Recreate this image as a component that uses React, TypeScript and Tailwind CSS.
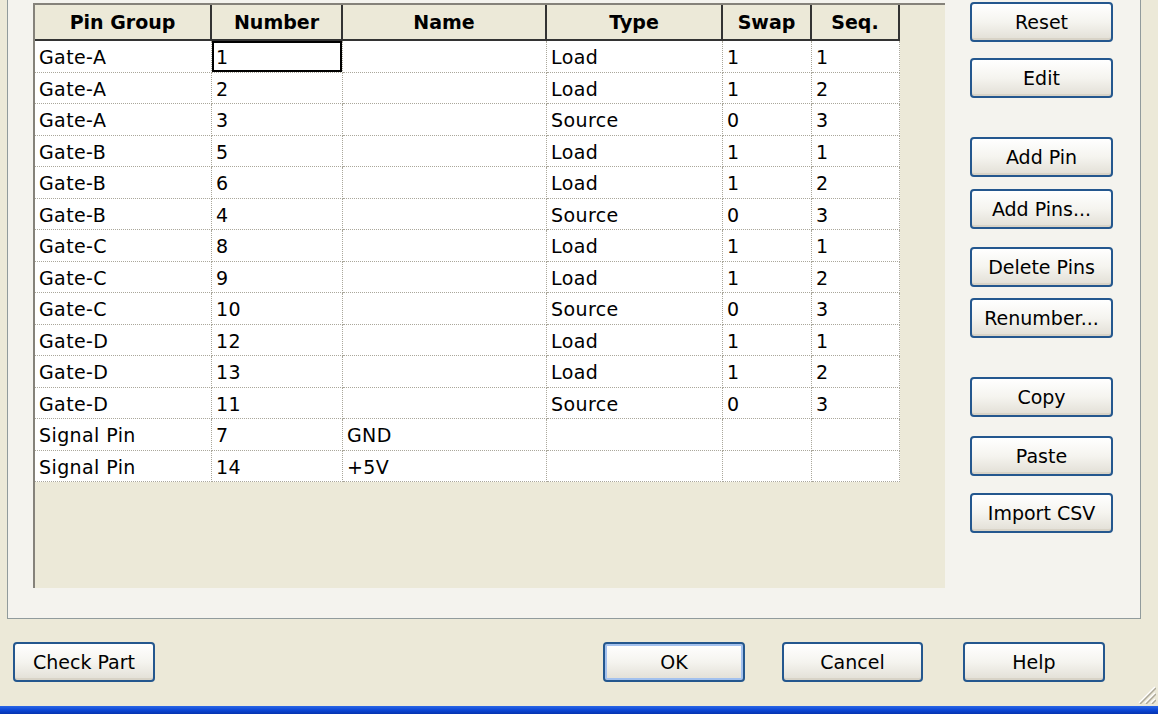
import React from 'react';

type Row = [string, string, string, string, string, string];

const columns = [
  { label: 'Pin Group', width: 'w-[177px]' },
  { label: 'Number', width: 'w-[131px]' },
  { label: 'Name', width: 'w-[204px]' },
  { label: 'Type', width: 'w-[176px]' },
  { label: 'Swap', width: 'w-[89px]' },
  { label: 'Seq.', width: 'w-[88px]' },
];

const rows: Row[] = [
  ['Gate-A', '1', '', 'Load', '1', '1'],
  ['Gate-A', '2', '', 'Load', '1', '2'],
  ['Gate-A', '3', '', 'Source', '0', '3'],
  ['Gate-B', '5', '', 'Load', '1', '1'],
  ['Gate-B', '6', '', 'Load', '1', '2'],
  ['Gate-B', '4', '', 'Source', '0', '3'],
  ['Gate-C', '8', '', 'Load', '1', '1'],
  ['Gate-C', '9', '', 'Load', '1', '2'],
  ['Gate-C', '10', '', 'Source', '0', '3'],
  ['Gate-D', '12', '', 'Load', '1', '1'],
  ['Gate-D', '13', '', 'Load', '1', '2'],
  ['Gate-D', '11', '', 'Source', '0', '3'],
  ['Signal Pin', '7', 'GND', '', '', ''],
  ['Signal Pin', '14', '+5V', '', '', ''],
];

// right-hand column: label + gap above it
const sideButtons = [
  { label: 'Reset', mt: 'mt-[2px]' },
  { label: 'Edit', mt: 'mt-[16px]' },
  { label: 'Add Pin', mt: 'mt-[39px]' },
  { label: 'Add Pins...', mt: 'mt-[12px]' },
  { label: 'Delete Pins', mt: 'mt-[18px]' },
  { label: 'Renumber...', mt: 'mt-[11px]' },
  { label: 'Copy', mt: 'mt-[39px]' },
  { label: 'Paste', mt: 'mt-[19px]' },
  { label: 'Import CSV', mt: 'mt-[17px]' },
];

const XpButton: React.FC<{ label: string; className?: string; isDefault?: boolean }> = ({
  label,
  className = '',
  isDefault = false,
}) => (
  <button
    className={`h-[40px] rounded-[4px] border-2 border-[#24578e] bg-linear-to-b from-[#ffffff] via-[#f5f4ef] to-[#e2dfd6] text-[19px] leading-none text-black flex items-center justify-center ${
      isDefault ? 'shadow-[inset_0_0_0_2px_#a3c1ee]' : 'shadow-[inset_0_-2px_0_#d8d3c7]'
    } ${className}`}
  >
    {label}
  </button>
);

const ResizeGrip: React.FC = () => (
  <svg width="20" height="20" viewBox="0 0 20 20" className="absolute right-[2px] bottom-[2px]">
    <g strokeWidth="1.5">
      <line x1="19" y1="3" x2="3" y2="19" stroke="#ffffff" />
      <line x1="20" y1="4" x2="4" y2="20" stroke="#aca899" />
      <line x1="19" y1="9" x2="9" y2="19" stroke="#ffffff" />
      <line x1="20" y1="10" x2="10" y2="20" stroke="#aca899" />
      <line x1="19" y1="15" x2="15" y2="19" stroke="#ffffff" />
      <line x1="20" y1="16" x2="16" y2="20" stroke="#aca899" />
    </g>
  </svg>
);

const App: React.FC = () => {
  return (
    <div className="w-[1158px] h-[714px] overflow-hidden bg-[#ece9d8] flex flex-col font-['DejaVu_Sans',sans-serif] text-black">
      <div className="ml-[7px] w-[1134px] h-[619px] shrink-0 border-x border-b border-[#919b9c] bg-[#f4f3ee] flex items-start">
        {/* pin grid */}
        <div className="ml-[25px] mt-[3px] w-[912px] h-[585px] bg-[#ece9d8] border-l-2 border-t-2 border-[#85827a] flex flex-col">
          <div className="flex h-[36px] shrink-0">
            {columns.map((col) => (
              <div
                key={col.label}
                className={`${col.width} h-full border-r-2 border-b-2 border-[#333333] flex items-center justify-center text-[19px] font-bold`}
              >
                {col.label}
              </div>
            ))}
          </div>
          {rows.map((row, r) => (
            <div key={r} className="flex h-[31.5px] shrink-0">
              {row.map((cell, c) => (
                <div
                  key={c}
                  className={`${columns[c].width} h-full bg-white border-r border-b border-dotted border-[#aaa79b] flex items-center pl-[4px] pt-[2px] text-[19px] tracking-[0.4px] whitespace-nowrap ${
                    r === 0 && c === 1 ? 'shadow-[inset_0_0_0_2px_#000]' : ''
                  }`}
                >
                  {cell}
                </div>
              ))}
            </div>
          ))}
        </div>

        {/* action buttons */}
        <div className="ml-[25px] w-[143px] flex flex-col">
          {sideButtons.map((b) => (
            <XpButton key={b.label} label={b.label} className={`${b.mt} w-[143px]`} />
          ))}
        </div>
      </div>

      <div className="relative h-[87px] shrink-0 flex items-start pt-[23px]">
        <XpButton label="Check Part" className="ml-[13px] w-[142px]" />
        <XpButton label="OK" className="ml-[448px] w-[142px]" isDefault />
        <XpButton label="Cancel" className="ml-[37px] w-[141px]" />
        <XpButton label="Help" className="ml-[40px] w-[142px]" />
        <ResizeGrip />
      </div>

      <div className="h-[8px] shrink-0 bg-linear-to-b from-[#2a66e6] via-[#0c47d6] to-[#0533b0]" />
    </div>
  );
};

export default App;
